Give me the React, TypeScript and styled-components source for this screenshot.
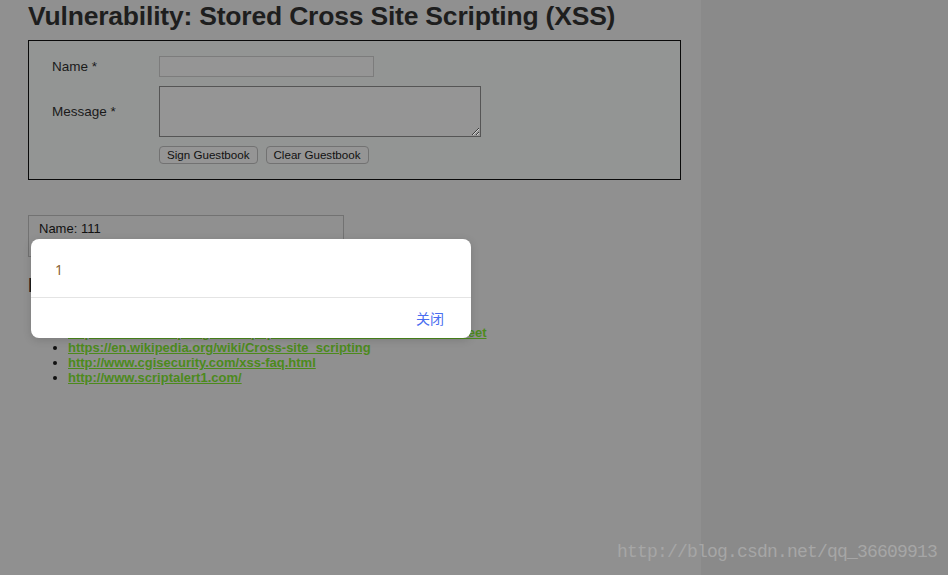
import React from "react";
import styled, { createGlobalStyle } from "styled-components";

const links = [
  "https://www.owasp.org/index.php/Cross-site_Scripting_(XSS)",
  "https://www.owasp.org/index.php/XSS_Filter_Evasion_Cheat_Sheet",
  "https://en.wikipedia.org/wiki/Cross-site_scripting",
  "http://www.cgisecurity.com/xss-faq.html",
  "http://www.scriptalert1.com/",
];

const App = () => {
  return (
    <>
      <GlobalStyle />
      <Page>
        <Main>
          <Title>Vulnerability: Stored Cross Site Scripting (XSS)</Title>
          <FormBox>
            <FormGrid>
              <Label>Name *</Label>
              <NameInput type="text" />
              <Label>Message *</Label>
              <MessageArea />
              <span />
              <ButtonRow>
                <Button type="button">Sign Guestbook</Button>
                <Button type="button">Clear Guestbook</Button>
              </ButtonRow>
            </FormGrid>
          </FormBox>
          <Entry>
            Name: 111
            <br />
            Message:
          </Entry>
          <SubTitle>More Information</SubTitle>
          <LinkList>
            {links.map((href) => (
              <li key={href}>
                <LinkItem href="#">{href}</LinkItem>
              </li>
            ))}
          </LinkList>
        </Main>
        <Side />
        <Dialog>
          <DialogBody>1</DialogBody>
          <DialogFooter>
            <CloseButton type="button">关闭</CloseButton>
          </DialogFooter>
        </Dialog>
        <Watermark>http://blog.csdn.net/qq_36609913</Watermark>
      </Page>
    </>
  );
};

export default App;

const GlobalStyle = createGlobalStyle`
  html, body {
    margin: 0;
    padding: 0;
    background: #8a8a8a;
  }
  #root {
    width: 948px;
    height: 575px;
    overflow: hidden;
  }
`;

const Page = styled.div`
  position: relative;
  display: flex;
  width: 948px;
  height: 575px;
  font-family: "Liberation Sans", Arial, sans-serif;
  color: #1c1c1c;
`;

const Main = styled.div`
  width: 701px;
  flex-shrink: 0;
  background: #909090;
  padding: 0 0 0 28px;
  box-sizing: border-box;
`;

const Side = styled.div`
  flex: 1;
  background: #8a8a8a;
`;

const Title = styled.h1`
  margin: 0;
  padding-top: 1px;
  font-size: 26.5px;
  line-height: 30px;
  font-weight: bold;
  color: #1e1e1e;
  letter-spacing: -0.2px;
  height: 39px;
  white-space: nowrap;
`;

const FormBox = styled.div`
  width: 653px;
  height: 140px;
  box-sizing: border-box;
  border: 1px solid #0a0a0a;
  background: #939594;
  padding: 15px 0 0 23px;
`;

const FormGrid = styled.div`
  display: grid;
  grid-template-columns: 107px auto;
  grid-template-rows: 21px 51px 18px;
  row-gap: 9px;
  align-items: center;
`;

const Label = styled.span`
  font-size: 13.5px;
  color: #1a1a1a;
`;

const NameInput = styled.input`
  width: 215px;
  height: 21px;
  box-sizing: border-box;
  margin: 0;
  border: 1px solid #7c7c7c;
  background: #959595;
  outline: none;
`;

const MessageArea = styled.textarea`
  width: 322px;
  height: 51px;
  box-sizing: border-box;
  margin: 0;
  border: 1px solid #555;
  background: #959595;
  outline: none;
`;

const ButtonRow = styled.div`
  display: flex;
  gap: 8px;
`;

const Button = styled.button`
  height: 18px;
  margin: 0;
  padding: 0 7px;
  border: 1px solid #727272;
  border-radius: 4px;
  background: #959595;
  font-family: "Liberation Sans", Arial, sans-serif;
  font-size: 11.6px;
  color: #111;
  line-height: 16px;
`;

const Entry = styled.div`
  margin-top: 35px;
  width: 316px;
  height: 42px;
  box-sizing: border-box;
  border: 1px solid #727272;
  padding: 5px 10px;
  font-size: 13px;
  line-height: 15px;
  color: #111;
`;

const SubTitle = styled.h2`
  margin: 16px 0 0;
  font-size: 20px;
  line-height: 24px;
  font-weight: bold;
  color: #1c1c1c;
`;

const LinkList = styled.ul`
  margin: 13px 0 0;
  padding-left: 40px;
  font-size: 13px;
  line-height: 15px;
  color: #111;
`;

const LinkItem = styled.a`
  color: #4c8a1c;
  font-weight: bold;
  text-decoration: underline;
`;

const Dialog = styled.div`
  position: absolute;
  left: 31px;
  top: 239px;
  width: 440px;
  height: 99px;
  background: #fff;
  border-radius: 8px;
  box-shadow: 0 2px 8px rgba(0, 0, 0, 0.15);
  display: flex;
  flex-direction: column;
  overflow: hidden;
`;

const DialogBody = styled.div`
  height: 59px;
  box-sizing: border-box;
  padding: 23px 24px 0;
  font-family: "Noto Sans", "Liberation Sans", sans-serif;
  font-size: 14px;
  line-height: 16px;
  color: #8a6436;
  border-bottom: 1px solid #e4e4e4;
`;

const DialogFooter = styled.div`
  flex: 1;
  display: flex;
  align-items: center;
  justify-content: flex-end;
  padding-right: 27px;
`;

const CloseButton = styled.button`
  border: none;
  background: none;
  padding: 0;
  font-family: "Noto Sans CJK SC", sans-serif;
  font-size: 14px;
  color: #4a6ef0;
`;

const Watermark = styled.div`
  position: absolute;
  left: 617px;
  top: 542px;
  font-family: "Liberation Mono", monospace;
  font-size: 18px;
  letter-spacing: -0.8px;
  color: #a6a6a6;
  white-space: nowrap;
`;
